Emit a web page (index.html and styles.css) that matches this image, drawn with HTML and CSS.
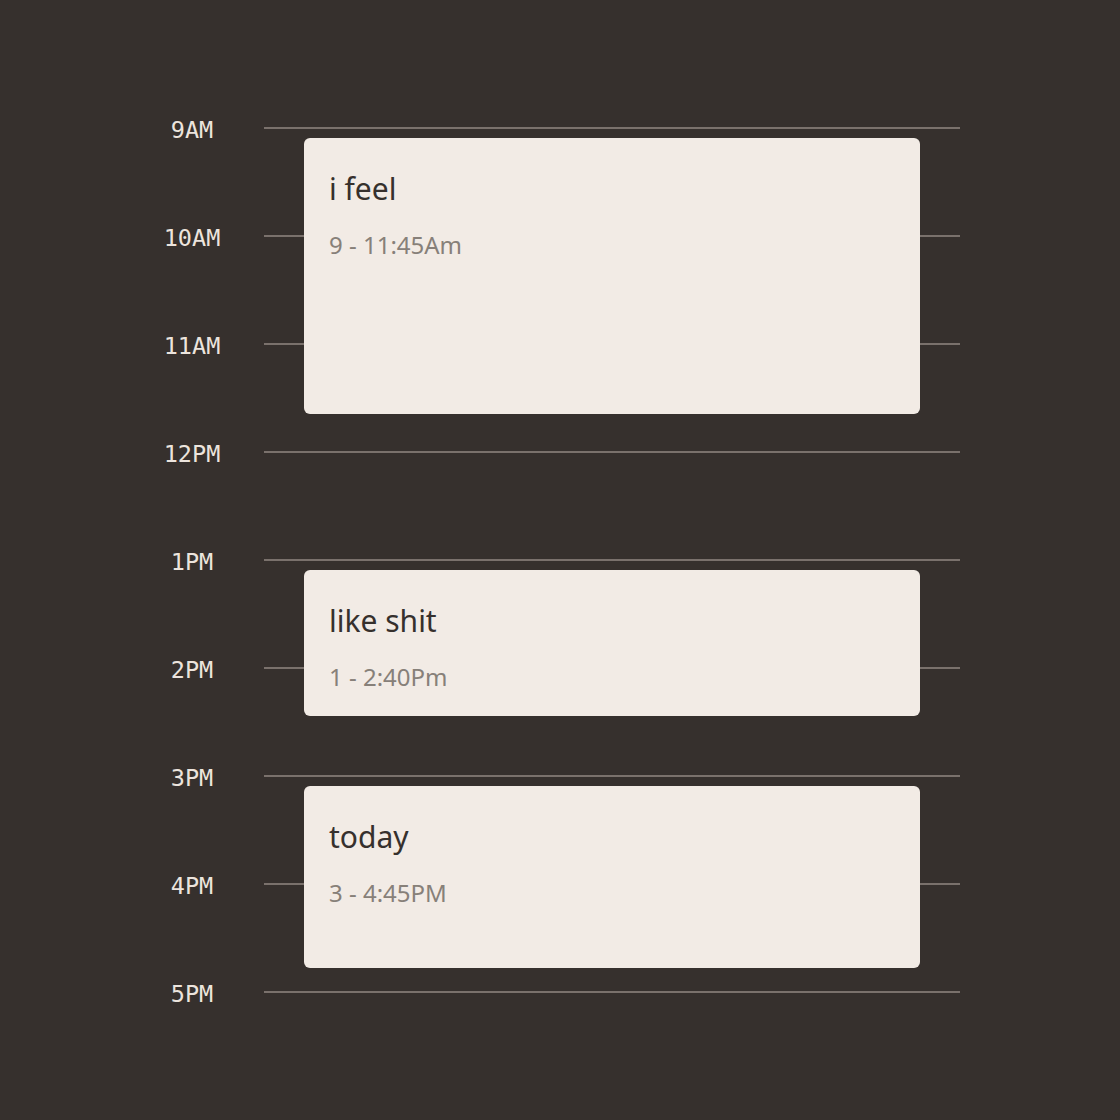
FILE: index.html
```html
<!DOCTYPE html>
<html lang="en">
<head>
<meta charset="utf-8">
<title>Day</title>
<link rel="stylesheet" href="styles.css">
</head>
<body>
<div class="timeline">
  <div class="hour"><span class="label">9AM</span><span class="line"></span></div>
  <div class="hour"><span class="label">10AM</span><span class="line"></span></div>
  <div class="hour"><span class="label">11AM</span><span class="line"></span></div>
  <div class="hour"><span class="label">12PM</span><span class="line"></span></div>
  <div class="hour"><span class="label">1PM</span><span class="line"></span></div>
  <div class="hour"><span class="label">2PM</span><span class="line"></span></div>
  <div class="hour"><span class="label">3PM</span><span class="line"></span></div>
  <div class="hour"><span class="label">4PM</span><span class="line"></span></div>
  <div class="hour"><span class="label">5PM</span><span class="line"></span></div>

  <div class="event event-1">
    <div class="title">i feel</div>
    <div class="time">9 - 11:45Am</div>
  </div>
  <div class="event event-2">
    <div class="title">like shit</div>
    <div class="time">1 - 2:40Pm</div>
  </div>
  <div class="event event-3">
    <div class="title">today</div>
    <div class="time">3 - 4:45PM</div>
  </div>
</div>
</body>
</html>
```

FILE: styles.css
```css
html, body {
  margin: 0;
  padding: 0;
  background: #36302d;
}

body {
  width: 1120px;
  height: 1120px;
  overflow: hidden;
}

.timeline {
  position: relative;
  margin: 74px 0 0 152px;
  width: 808px;
}

.hour {
  height: 108px;
  display: flex;
  align-items: center;
  gap: 32px;
}

.label {
  width: 80px;
  text-align: center;
  font-family: "DejaVu Sans Mono", "Liberation Mono", monospace;
  font-size: 23.5px;
  line-height: 28px;
  color: #ece4dd;
  margin-top: 3px;
}

.line {
  flex: 1;
  height: 2px;
  background: #7a716c;
  margin-top: 0;
}

.event {
  position: absolute;
  left: 152px;
  width: 616px;
  box-sizing: border-box;
  padding: 33px 25px 0;
  background: #f2ebe5;
  border-radius: 6px;
  font-family: "Noto Sans", "Open Sans", sans-serif;
}

.event-1 { top: 64px; height: 276px; }
.event-2 { top: 496px; height: 146px; }
.event-3 { top: 712px; height: 182px; }

.title {
  font-size: 30px;
  line-height: 36px;
  color: #36302d;
}

.time {
  margin-top: 26px;
  font-size: 24px;
  line-height: 24px;
  color: #878079;
}
```
